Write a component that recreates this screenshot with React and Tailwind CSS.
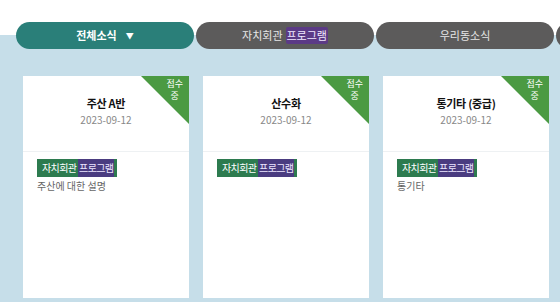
import React from 'react';

const tabs = [
    { label: '전체소식', active: true },
    { label: '자치회관', highlight: '프로그램' },
    { label: '우리동소식' },
    { label: '' },
];

const items = [
    { title: '주산 A반', date: '2023-09-12', desc: '주산에 대한 설명' },
    { title: '산수화', date: '2023-09-12', desc: '' },
    { title: '통기타 (중급)', date: '2023-09-12', desc: '통기타' },
];

const Tag = () => (
    <div className="flex h-[18px] w-fit items-center bg-[#2d7b4f] pl-[5px] pr-[3px] text-[10px] leading-[18px] tracking-[-0.6px] text-white">
        자치회관&nbsp;<span className="bg-[#4a3c80] px-[1px] text-[#ece6ff]">프로그램</span>
    </div>
);

const Card = ({ item }) => (
    <div className="relative h-[222px] w-[166px] shrink-0 bg-white">
        <div className="absolute right-0 top-0 h-[48px] w-[48px] bg-[#4b9a42] [clip-path:polygon(0_0,100%_0,100%_100%)]">
            <div className="absolute right-[6px] top-[2px] text-center text-[9px] leading-[12px] text-white">
                <div>접수</div>
                <div>중</div>
            </div>
        </div>
        <div className="pt-[19px] text-center">
            <div className="text-[11px] font-bold leading-[16px] tracking-[-0.3px] text-[#111]">{item.title}</div>
            <div className="mt-[1px] text-[10px] leading-[16px] text-[#888]">{item.date}</div>
        </div>
        <div className="mt-[23px] border-t border-[#eef1f3] px-[14px] pt-[7px]">
            <Tag />
            <div className="mt-[2px] text-[10px] leading-[14px] text-[#666]">{item.desc}</div>
        </div>
    </div>
);

const App = () => {
    return (
        <div
            className="h-[302px] w-[560px] overflow-hidden bg-[linear-gradient(to_bottom,#ffffff_35px,#c6dee9_35px)]"
            style={{ fontFamily: '"Noto Sans CJK KR", "Noto Sans", sans-serif' }}
        >
            <div className="flex gap-[2px] pl-[16px] pt-[22px]">
                {tabs.map((t, i) => (
                    <div
                        key={i}
                        className={`flex h-[27px] w-[178px] shrink-0 items-center justify-center rounded-full text-[11px] ${
                            t.active ? 'bg-[#2a7f79] font-bold text-white' : 'bg-[#5c5b5b] text-[#e6e6e6]'
                        }`}
                    >
                        {t.label}
                        {t.active && <span className="ml-[9px] text-[8px]">▼</span>}
                        {t.highlight && (
                            <span className="ml-[3px] rounded-[2px] bg-[#5b3a86] px-[1px] leading-[17px] text-[#f0e8ff]">
                                {t.highlight}
                            </span>
                        )}
                    </div>
                ))}
            </div>
            <div className="mt-[27px] flex gap-[14px] pl-[23px]">
                {items.map((item, i) => (
                    <Card key={i} item={item} />
                ))}
            </div>
        </div>
    );
};

export default App;
